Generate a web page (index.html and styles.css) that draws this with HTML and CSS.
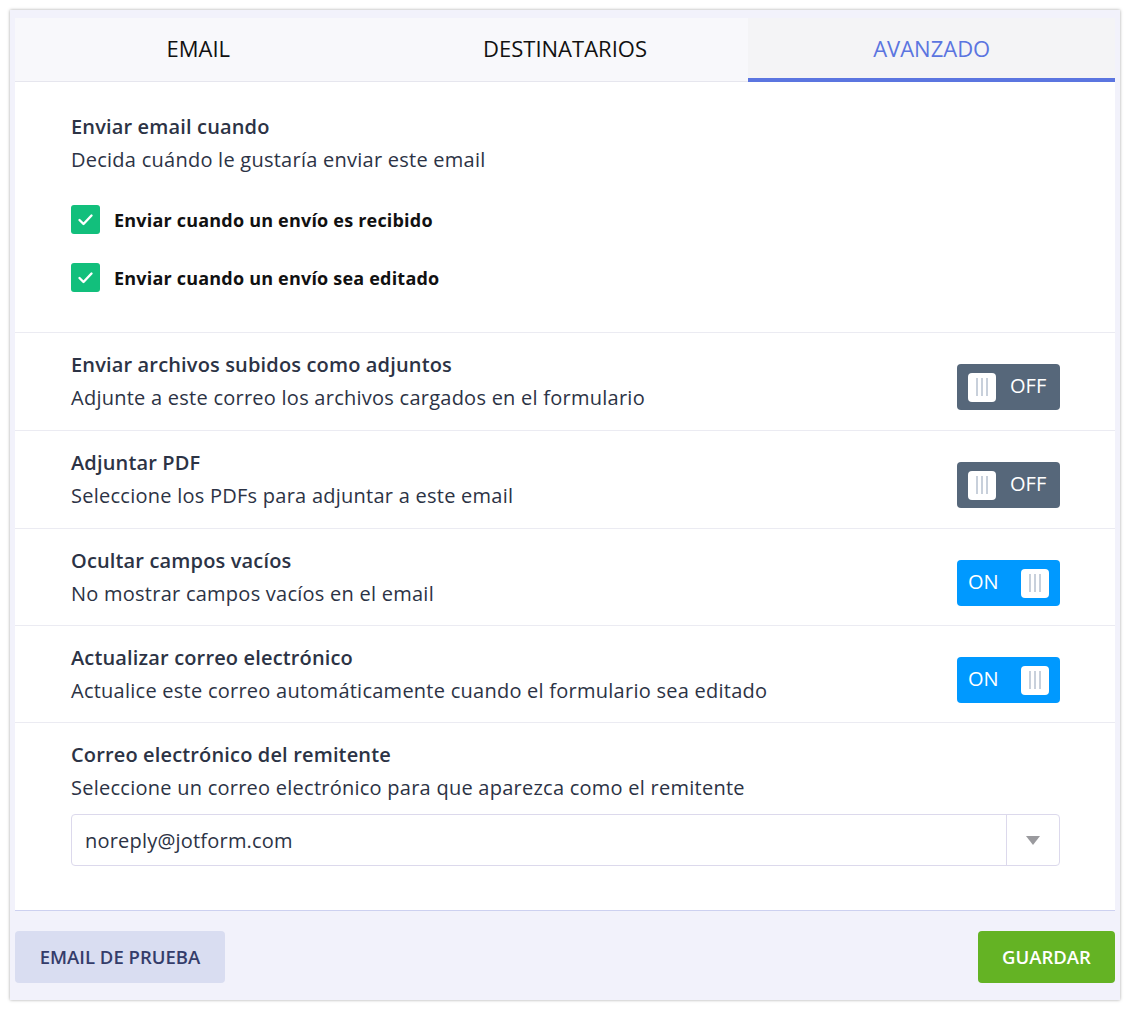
FILE: index.html
```html
<!DOCTYPE html>
<html>
<head>
    <title>Email Settings</title>
    <link rel="stylesheet" href="styles.css">
</head>
<body>
    <div class="panel">
        <div class="card">
            <div class="tabs">
                <div class="tab">EMAIL</div>
                <div class="tab">DESTINATARIOS</div>
                <div class="tab active">AVANZADO</div>
            </div>

            <div class="section first">
                <div class="title">Enviar email cuando</div>
                <div class="desc">Decida cuándo le gustaría enviar este email</div>
                <ul class="checks">
                    <li>
                        <span class="box">
                            <svg width="29" height="29" viewBox="0 0 29 29"><polyline points="8.5,15 12.5,19 20.5,10.5" fill="none" stroke="#fff" stroke-width="2.4" stroke-linecap="round" stroke-linejoin="round"/></svg>
                        </span>
                        Enviar cuando un envío es recibido
                    </li>
                    <li>
                        <span class="box">
                            <svg width="29" height="29" viewBox="0 0 29 29"><polyline points="8.5,15 12.5,19 20.5,10.5" fill="none" stroke="#fff" stroke-width="2.4" stroke-linecap="round" stroke-linejoin="round"/></svg>
                        </span>
                        Enviar cuando un envío sea editado
                    </li>
                </ul>
            </div>

            <div class="section row">
                <div>
                    <div class="title">Enviar archivos subidos como adjuntos</div>
                    <div class="desc">Adjunte a este correo los archivos cargados en el formulario</div>
                </div>
                <div class="toggle off"><span class="knob"><i></i><i></i><i></i></span><span class="label">OFF</span></div>
            </div>

            <div class="section row">
                <div>
                    <div class="title">Adjuntar PDF</div>
                    <div class="desc">Seleccione los PDFs para adjuntar a este email</div>
                </div>
                <div class="toggle off"><span class="knob"><i></i><i></i><i></i></span><span class="label">OFF</span></div>
            </div>

            <div class="section row">
                <div>
                    <div class="title">Ocultar campos vacíos</div>
                    <div class="desc">No mostrar campos vacíos en el email</div>
                </div>
                <div class="toggle on"><span class="label">ON</span><span class="knob"><i></i><i></i><i></i></span></div>
            </div>

            <div class="section row">
                <div>
                    <div class="title">Actualizar correo electrónico</div>
                    <div class="desc">Actualice este correo automáticamente cuando el formulario sea editado</div>
                </div>
                <div class="toggle on"><span class="label">ON</span><span class="knob"><i></i><i></i><i></i></span></div>
            </div>

            <div class="section last">
                <div class="title">Correo electrónico del remitente</div>
                <div class="desc">Seleccione un correo electrónico para que aparezca como el remitente</div>
                <div class="select">
                    <span class="value">noreply@jotform.com</span>
                    <span class="arrow"></span>
                </div>
            </div>
        </div>

        <div class="footer">
            <button class="btn test">EMAIL DE PRUEBA</button>
            <button class="btn save">GUARDAR</button>
        </div>
    </div>
</body>
</html>
```

FILE: styles.css
```css
body {
    font-family: "Open Sans", "Noto Sans", sans-serif;
    background-color: #fff;
    color: #2c3345;
    margin: 0;
    padding: 10px;
}
.panel {
    width: 1110px;
    height: 990px;
    box-sizing: border-box;
    background-color: #f2f2fb;
    box-shadow: 0 0 3px rgba(0, 0, 0, 0.35);
    padding: 8px 5px 0 5px;
}
.card {
    background-color: #fff;
    height: 893px;
    box-sizing: border-box;
    border-bottom: 1px solid #cdd1f0;
}
.tabs {
    display: flex;
}
.tab {
    flex: 1;
    height: 64px;
    box-sizing: border-box;
    display: flex;
    align-items: center;
    justify-content: center;
    padding-bottom: 3px;
    font-size: 22px;
    color: #111;
    background-color: #f8f8fb;
    border-bottom: 1px solid #e6e6ee;
}
.tab.active {
    color: #5b75e0;
    background-color: #f4f4f6;
    border-bottom: 4px solid #5b75e0;
    padding-bottom: 0;
}
.section {
    padding: 20px 55px 20px 56px;
    border-top: 1px solid #ebebf2;
}
.section.first {
    border-top: none;
    padding-top: 33px;
    padding-bottom: 40px;
}
.row:nth-child(5),
.row:nth-child(6) {
    padding-bottom: 19px;
}
.title {
    font-size: 20px;
    line-height: 24px;
    font-weight: 600;
    letter-spacing: 0.15px;
}
.desc {
    font-size: 20px;
    line-height: 24px;
    letter-spacing: 0.25px;
    margin-top: 9px;
}
.checks {
    list-style: none;
    padding: 0;
    margin: 33px 0 0 0;
}
.checks li {
    display: flex;
    align-items: center;
    font-size: 18px;
    font-weight: 700;
    letter-spacing: 0.2px;
    color: #111;
    height: 29px;
    margin-bottom: 29px;
}
.checks li:last-child {
    margin-bottom: 0;
}
.box {
    width: 29px;
    height: 29px;
    border-radius: 3px;
    background-color: #12bf7c;
    margin-right: 14px;
}
.box svg {
    display: block;
}
.row {
    display: flex;
    justify-content: space-between;
}
.toggle {
    align-self: flex-end;
    width: 103px;
    height: 46px;
    box-sizing: border-box;
    border-radius: 4px;
    display: flex;
    align-items: center;
    padding: 0 11px;
    gap: 14px;
    color: #fff;
    font-size: 20px;
    font-weight: 500;
}
.toggle .label {
    margin-bottom: 3px;
}
.toggle.off {
    background-color: #56677a;
}
.toggle.on {
    background-color: #0099ff;
    justify-content: space-between;
}
.knob {
    width: 28px;
    height: 29px;
    background-color: #fff;
    border-radius: 4px;
    display: flex;
    align-items: center;
    justify-content: center;
    gap: 3px;
}
.knob i {
    width: 2px;
    height: 18px;
    background-color: #c8d0db;
}
.select {
    margin-top: 14px;
    height: 52px;
    box-sizing: border-box;
    border: 1px solid #dcd9ec;
    border-radius: 4px;
    display: flex;
    align-items: center;
}
.value {
    flex: 1;
    padding-left: 13px;
    font-size: 20px;
    letter-spacing: 0.2px;
}
.arrow {
    width: 52px;
    height: 50px;
    border-left: 1px solid #dcd9ec;
    display: flex;
    align-items: center;
    justify-content: center;
}
.arrow::after {
    content: "";
    border-left: 7px solid transparent;
    border-right: 7px solid transparent;
    border-top: 9px solid #9a9a9e;
}
.footer {
    display: flex;
    justify-content: space-between;
    padding-top: 20px;
}
.btn {
    font-family: "Open Sans", "Noto Sans", sans-serif;
    height: 52px;
    padding-bottom: 3px;
    border: none;
    border-radius: 4px;
    font-size: 18.5px;
    font-weight: 600;
    cursor: pointer;
}
.btn.test {
    width: 210px;
    background-color: #d9ddf1;
    color: #343c6a;
}
.btn.save {
    width: 137px;
    background-color: #64b324;
    color: #fff;
}
```
